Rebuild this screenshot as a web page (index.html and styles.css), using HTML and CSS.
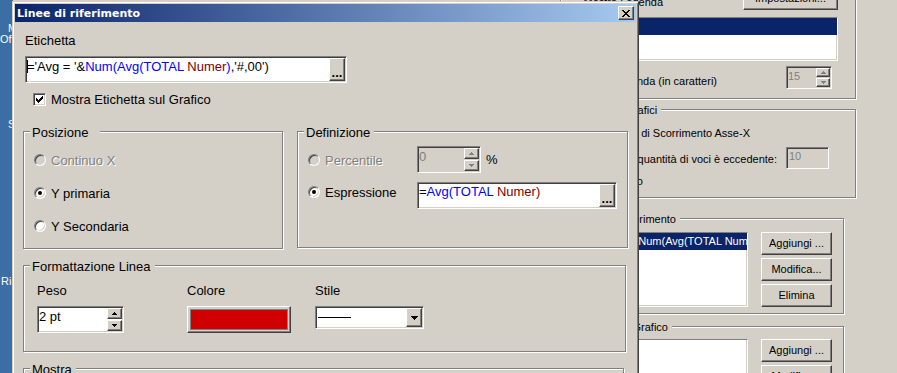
FILE: index.html
```html
<!DOCTYPE html>
<html lang="it">
<head>
<meta charset="UTF-8">
<title>Linee di riferimento</title>
<link rel="stylesheet" href="styles.css">
</head>
<body>
<div class="desktop">
    <div class="t1">Mi</div>
    <div class="t2">Of</div>
    <div class="t3">St</div>
    <div class="t4">Ric</div>
</div>

<!-- finestra proprieta grafico (dietro) -->
<div class="window back">
    <div class="group grp-legend">
        <div class="top-row">
            <span class="legend-check">Mostra Legenda</span>
            <span class="button raised btn-settings">Impostazioni...</span>
        </div>
        <div class="listbox lb-legend"><div class="lb-item selected"></div></div>
        <div class="right-row limit-row">
            <span class="limit-label">Limita Legenda (in caratteri)</span>
            <span class="spinbox sunken disabled sb-limit">
                <span class="sb-value">15</span>
                <span class="spin">
                    <span class="spin-btn raised"><svg width="5" height="3"><path d="M2 0h1v1h1v1h1v1H0V2h1V1h1z"/></svg></span>
                    <span class="spin-btn raised"><svg width="5" height="3"><path d="M0 0h5v1H4v1H3v1H2V2H1V1H0z"/></svg></span>
                </span>
            </span>
        </div>
    </div>

    <div class="group grp-scroll">
        <span class="legend">Scorrimento Grafici</span>
        <div class="right-row scroll-row1"><span>Abilita Barra di Scorrimento Asse-X</span></div>
        <div class="right-row scroll-row2">
            <span class="scroll-label">Quando la quantità di voci è eccedente:</span>
            <span class="numbox sunken">10</span>
        </div>
        <div class="right-row scroll-row3"><span>Invertito</span></div>
    </div>

    <div class="group grp-ref">
        <span class="legend">Linee di riferimento</span>
        <div class="list-row">
            <div class="listbox lb-side">
                <div class="lb-item selected">='Avg = '&amp;Num(Avg(TOTAL Numer),'#,00')</div>
            </div>
            <div class="btn-col">
                <span class="button raised">Aggiungi ...</span>
                <span class="button raised">Modifica...</span>
                <span class="button raised">Elimina</span>
            </div>
        </div>
    </div>

    <div class="group grp-text">
        <span class="legend">Testo nel Grafico</span>
        <div class="list-row">
            <div class="listbox lb-side lb-tall"></div>
            <div class="btn-col">
                <span class="button raised">Aggiungi ...</span>
                <span class="button raised">Modifica...</span>
            </div>
        </div>
    </div>
</div>

<!-- dialogo Linee di riferimento -->
<div class="window front">
    <div class="titlebar">
        <span class="title">Linee di riferimento</span>
        <span class="close-btn raised">
            <svg width="8" height="7"><path d="M0 0h2v1H0zM6 0h2v1H6zM1 1h2v1H1zM5 1h2v1H5zM2 2h4v1H2zM3 3h2v1H3zM2 4h4v1H2zM1 5h2v1H1zM5 5h2v1H5zM0 6h2v1H0zM6 6h2v1H6z"/></svg>
        </span>
    </div>

    <div class="dlg-body">
        <div class="field-label">Etichetta</div>
        <div class="textbox sunken label-box">
            <span class="code"><span class="caret"></span>='Avg = '&amp;<span class="fn">Num(Avg(TOTAL </span><span class="fld">Numer</span><span class="fn">)</span>,'#,00')</span>
            <span class="dots raised">...</span>
        </div>

        <div class="check-row">
            <span class="checkbox sunken">
                <svg width="7" height="7"><path d="M6 0h1v1H6zM5 1h2v1H5zM0 2h1v1H0zM4 2h3v1H4zM0 3h2v1H0zM3 3h3v1H3zM0 4h5v1H0zM1 5h3v1H1zM2 6h1v1H2z"/></svg>
            </span>
            <span>Mostra Etichetta sul Grafico</span>
        </div>

        <div class="group-row">
            <div class="group grp-pos">
                <span class="legend">Posizione</span>
                <div class="radio-list">
                    <div class="radio-row disabled"><span class="radio"></span><span class="dim">Continuo X</span></div>
                    <div class="radio-row"><span class="radio on"></span><span>Y primaria</span></div>
                    <div class="radio-row"><span class="radio"></span><span>Y Secondaria</span></div>
                </div>
            </div>

            <div class="group grp-def">
                <span class="legend">Definizione</span>
                <div class="def-row first">
                    <div class="def-choice disabled"><span class="radio"></span><span class="dim">Percentile</span></div>
                    <span class="spinbox sunken disabled sb-pct">
                        <span class="sb-value">0</span>
                        <span class="spin">
                            <span class="spin-btn raised"><svg width="5" height="3"><path d="M2 0h1v1h1v1h1v1H0V2h1V1h1z"/></svg></span>
                            <span class="spin-btn raised"><svg width="5" height="3"><path d="M0 0h5v1H4v1H3v1H2V2H1V1H0z"/></svg></span>
                        </span>
                    </span>
                    <span class="percent">%</span>
                </div>
                <div class="def-row second">
                    <div class="def-choice"><span class="radio on"></span><span>Espressione</span></div>
                    <div class="textbox sunken expr-box">
                        <span class="code">=<span class="fn">Avg(TOTAL </span><span class="fld">Numer)</span></span>
                        <span class="dots raised">...</span>
                    </div>
                </div>
            </div>
        </div>

        <div class="group grp-fmt">
            <span class="legend">Formattazione Linea</span>
            <div class="fmt-cols">
                <div class="fmt-col col-peso">
                    <span class="col-label">Peso</span>
                    <span class="spinbox sunken sb-peso">
                        <span class="sb-value">2 pt</span>
                        <span class="spin">
                            <span class="spin-btn raised"><svg width="5" height="3"><path d="M2 0h1v1h1v1h1v1H0V2h1V1h1z"/></svg></span>
                            <span class="spin-btn raised"><svg width="5" height="3"><path d="M0 0h5v1H4v1H3v1H2V2H1V1H0z"/></svg></span>
                        </span>
                    </span>
                </div>
                <div class="fmt-col col-colore">
                    <span class="col-label">Colore</span>
                    <span class="color-btn raised"><span class="swatch"></span></span>
                </div>
                <div class="fmt-col">
                    <span class="col-label">Stile</span>
                    <span class="combo sunken">
                        <span class="combo-val"><span class="line-sample"></span></span>
                        <span class="combo-btn raised"><svg width="7" height="4"><path d="M0 0h7v1H6v1H5v1H4v1H3V3H2V2H1V1H0z"/></svg></span>
                    </span>
                </div>
            </div>
        </div>

        <div class="group grp-show">
            <span class="legend">Mostra</span>
        </div>
    </div>
</div>
</body>
</html>
```

FILE: styles.css
```css
* {
    box-sizing: border-box;
}

body {
    margin: 0;
    width: 897px;
    height: 373px;
    overflow: hidden;
    position: relative;
    background-color: #3a6ea5;
    font-family: "Liberation Sans", Arial, sans-serif;
    font-size: 13px;
    line-height: 15px;
    color: #000;
}

svg {
    display: block;
    shape-rendering: crispEdges;
}

/* desktop */

.desktop {
    display: flex;
    flex-direction: column;
    align-items: flex-start;
    width: 12px;
    height: 373px;
    overflow: hidden;
    padding-top: 23px;
    color: #fff;
    font-size: 11px;
    line-height: 11px;
    white-space: nowrap;
}

.t1 { margin-left: 8px; }
.t3 { margin: 74px 0 0 8px; }
.t4 { margin: 146px 0 0 1px; }

/* windows */

.window {
    position: absolute;
    background-color: #d4d0c8;
}

.back {
    left: 13px;
    top: -40px;
    width: 900px;
    height: 460px;
    padding: 20px 0 0 547px;
    font-size: 11px;
}

.front {
    left: 12px;
    top: 1px;
    width: 627px;
    height: 420px;
    border: 1px solid;
    border-color: #d4d0c8 #404040 #404040 #d4d0c8;
    box-shadow: inset 1px 1px #fff, inset -1px -1px #808080;
    padding: 2px;
}

.titlebar {
    display: flex;
    align-items: center;
    height: 18px;
    background: linear-gradient(to right, #0a246a, #a6caf0);
}

.title {
    padding: 1px 0 0 2px;
    color: #fff;
    font-family: "DejaVu Sans", sans-serif;
    font-weight: bold;
    font-size: 11px;
    line-height: 17px;
}

.close-btn {
    display: flex;
    align-items: center;
    justify-content: center;
    width: 16px;
    height: 14px;
    margin: 0 2px 0 auto;
    background-color: #d4d0c8;
}

/* 3d borders */

.raised {
    border: 1px solid;
    border-color: #fff #404040 #404040 #fff;
    box-shadow: inset -1px -1px #808080;
}

.sunken {
    border: 1px solid;
    border-color: #808080 #fff #fff #808080;
    box-shadow: inset 1px 1px #404040, inset -1px -1px #d4d0c8;
    padding: 1px;
}

.button {
    display: flex;
    align-items: center;
    justify-content: center;
    height: 23px;
    background-color: #d4d0c8;
    white-space: nowrap;
}

/* group boxes */

.group {
    border: 1px solid #808080;
    box-shadow: inset 1px 1px #fff, 1px 1px #fff;
}

.legend {
    display: block;
    width: fit-content;
    margin: -7px 0 0 6px;
    padding: 0 4px 0 2px;
    background-color: #d4d0c8;
    line-height: 15px;
    white-space: nowrap;
}

/* front dialog body */

.dlg-body {
    padding-left: 8px;
}

.field-label {
    margin: 11px 0 0 2px;
    line-height: 16px;
}

.textbox {
    display: flex;
    height: 27px;
    background-color: #fff;
}

.label-box {
    width: 322px;
    margin: 7px 0 0 2px;
}

.code {
    flex: 1;
    padding-top: 1px;
    white-space: nowrap;
    overflow: hidden;
}

.expr-box .code {
    padding-top: 0;
}

.caret {
    display: inline-block;
    width: 1px;
    height: 13px;
    margin-right: -1px;
    background-color: #000;
    vertical-align: -2px;
}

.fn { color: #0000ff; }
.fld { color: #800000; }

.dots {
    display: flex;
    align-items: flex-end;
    justify-content: center;
    width: 16px;
    flex: none;
    padding-bottom: 2px;
    background-color: #d4d0c8;
    font-weight: bold;
    line-height: 10px;
}

.check-row {
    display: flex;
    align-items: center;
    gap: 5px;
    height: 13px;
    margin: 10px 0 0 10px;
    line-height: 13px;
}

.checkbox {
    display: flex;
    align-items: center;
    justify-content: center;
    width: 13px;
    height: 13px;
    flex: none;
    background-color: #fff;
}

.group-row {
    display: flex;
    align-items: flex-start;
    gap: 14px;
    margin-top: 25px;
}

.grp-pos {
    width: 260px;
    height: 118px;
}

.grp-pos .legend {
    padding-right: 12px;
}

.grp-def {
    width: 331px;
    height: 117px;
}

.radio-list {
    display: flex;
    flex-direction: column;
    gap: 13px;
    margin: 10px 0 0 10px;
}

.radio-row,
.def-choice {
    display: flex;
    align-items: center;
    gap: 5px;
    height: 20px;
}

.radio {
    display: flex;
    align-items: center;
    justify-content: center;
    width: 12px;
    height: 12px;
    flex: none;
    border-radius: 50%;
    border: 1px solid;
    border-color: #808080 #fff #fff #808080;
    box-shadow: inset 1px 1px #404040, inset -1px -1px #d4d0c8;
    background-color: #fff;
}

.disabled .radio {
    background-color: #d4d0c8;
}

.radio.on::after {
    content: "";
    width: 4px;
    height: 4px;
    border-radius: 50%;
    background-color: #000;
}

.dim {
    color: #808080;
    text-shadow: 1px 1px 0 #fff;
}

.def-row {
    display: flex;
    align-items: flex-start;
    margin-left: 10px;
}

.def-row.first {
    margin-top: 6px;
}

.def-row.second {
    margin-top: 9px;
}

.def-choice {
    width: 109px;
}

.def-row.first .def-choice {
    margin-top: 4px;
}

.percent {
    margin: 4px 0 0 5px;
    line-height: 20px;
}

.expr-box {
    width: 200px;
}

/* spin boxes */

.spinbox {
    display: flex;
    background-color: #fff;
}

.spinbox.disabled {
    background-color: #d4d0c8;
    color: #808080;
}

.sb-value {
    flex: 1;
    padding-top: 1px;
    white-space: nowrap;
}

.spin {
    display: flex;
    flex-direction: column;
    gap: 1px;
    width: 15px;
}

.spin-btn {
    flex: 1;
    display: flex;
    align-items: center;
    justify-content: center;
    background-color: #d4d0c8;
}

.disabled .spin-btn svg {
    fill: #808080;
}

.sb-pct {
    width: 64px;
    height: 27px;
}

.sb-peso {
    width: 87px;
    height: 27px;
}

/* formattazione linea */

.grp-fmt {
    width: 603px;
    height: 87px;
    margin-top: 16px;
}

.fmt-cols {
    display: flex;
    margin: 9px 0 0 13px;
}

.fmt-col {
    display: flex;
    flex-direction: column;
    align-items: flex-start;
}

.col-label {
    line-height: 16px;
    margin-bottom: 7px;
}

.col-peso { width: 150px; }
.col-colore { width: 128px; }

.color-btn {
    display: flex;
    width: 104px;
    height: 27px;
    padding: 2px;
    background-color: #d4d0c8;
}

.swatch {
    flex: 1;
    border: 1px solid #808080;
    background-color: #d00000;
}

.combo {
    display: flex;
    width: 109px;
    height: 23px;
    background-color: #fff;
}

.combo-val {
    flex: 1;
    padding: 9px 0 0 1px;
}

.line-sample {
    display: block;
    width: 33px;
    height: 1px;
    background-color: #000;
}

.combo-btn {
    display: flex;
    align-items: center;
    justify-content: center;
    width: 16px;
    background-color: #d4d0c8;
}

.grp-show {
    width: 601px;
    height: 40px;
    margin-top: 16px;
}

/* background window */

.grp-legend {
    width: 296px;
    height: 119px;
}

.top-row {
    display: flex;
    justify-content: flex-end;
    align-items: flex-end;
    height: 23px;
    margin-top: 6px;
}

.legend-check {
    margin-right: 80px;
    white-space: nowrap;
}

.btn-settings {
    width: 95px;
    margin-right: 17px;
}

.listbox {
    border: 1px solid;
    border-color: #808080 #fff #fff #808080;
    box-shadow: inset -1px -1px #d4d0c8;
    background-color: #fff;
    overflow: hidden;
}

.lb-legend {
    width: 238px;
    height: 44px;
    margin: 7px 17px 0 auto;
}

.lb-item {
    height: 17px;
    padding-left: 2px;
    line-height: 17px;
    white-space: nowrap;
    overflow: hidden;
}

.lb-item.selected {
    background-color: #0a246a;
    color: #fff;
}

.right-row {
    display: flex;
    justify-content: flex-end;
    align-items: flex-start;
    white-space: nowrap;
}

.limit-row {
    margin-top: 5px;
}

.limit-label {
    margin: 8px 69px 0 0;
}

.sb-limit {
    width: 46px;
    height: 23px;
    margin-right: 23px;
}

.sb-limit .spin {
    width: 14px;
}

.grp-scroll {
    width: 296px;
    height: 89px;
    margin-top: 10px;
}

.grp-scroll .legend {
    margin-left: auto;
    margin-right: 194px;
}

.scroll-row1 {
    margin: 8px 105px 0 0;
}

.scroll-row2 {
    margin-top: 6px;
}

.scroll-label {
    margin: 5px 9px 0 0;
}

.numbox {
    width: 43px;
    height: 22px;
    margin-right: 26px;
    padding-left: 2px;
    color: #808080;
}

.scroll-row3 {
    margin: 5px 212px 0 0;
}

.grp-ref {
    width: 284px;
    height: 96px;
    margin-top: 20px;
}

.grp-ref .legend {
    margin-left: auto;
    margin-right: 163px;
}

.grp-text {
    width: 284px;
    height: 120px;
    margin-top: 12px;
}

.grp-text .legend {
    margin-left: auto;
    margin-right: 171px;
}

.list-row {
    display: flex;
    align-items: flex-start;
    margin: 5px 0 0 25px;
}

.grp-text .list-row {
    margin-top: 4px;
}

.lb-side {
    width: 162px;
    height: 75px;
}

.lb-tall {
    height: 80px;
}

.btn-col {
    display: flex;
    flex-direction: column;
    gap: 3px;
    width: 71px;
    margin-left: 13px;
}
```
